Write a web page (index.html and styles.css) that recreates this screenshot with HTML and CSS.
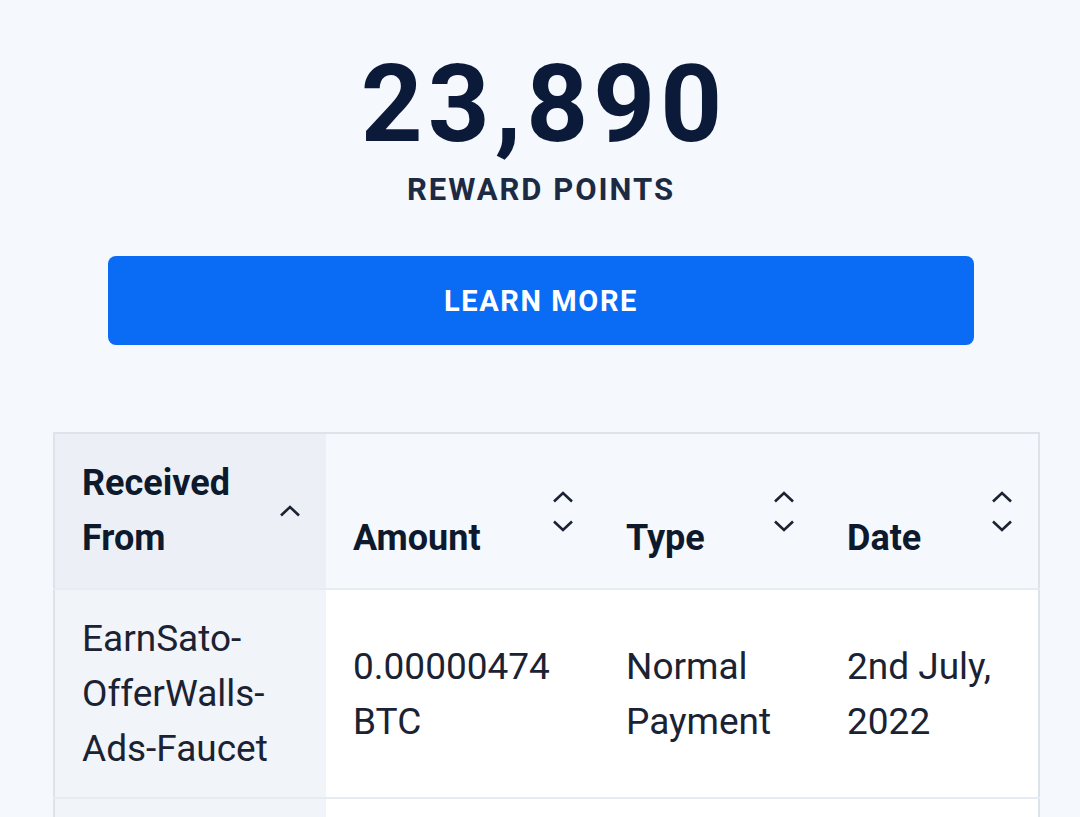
FILE: index.html
```html
<!DOCTYPE html>
<html lang="en">
<head>
  <meta charset="UTF-8">
  <meta name="viewport" content="width=device-width, initial-scale=1.0">
  <title>Reward Points</title>
  <link rel="stylesheet" href="styles.css">
</head>
<body>
  <main class="page">
    <section class="points">
      <h1 class="points-value">23,890</h1>
      <p class="points-label">REWARD POINTS</p>
      <button class="learn-more">LEARN MORE</button>
    </section>

    <table class="history">
      <colgroup>
        <col class="col-from">
        <col class="col-amount">
        <col class="col-type">
        <col class="col-date">
      </colgroup>
      <thead>
        <tr>
          <th class="sorted">
            <div class="th-inner">
              <span class="th-label">Received<br>From</span>
              <span class="sort">
                <svg width="22" height="12" viewBox="0 0 22 12"><path d="M2 10.5 L11 2 L20 10.5" fill="none" stroke="currentColor" stroke-width="2.6"/></svg>
              </span>
            </div>
          </th>
          <th>
            <div class="th-inner">
              <span class="th-label">Amount</span>
              <span class="sort">
                <svg width="22" height="12" viewBox="0 0 22 12"><path d="M2 10.5 L11 2 L20 10.5" fill="none" stroke="currentColor" stroke-width="2.6"/></svg>
                <svg width="22" height="12" viewBox="0 0 22 12"><path d="M2 1.5 L11 10 L20 1.5" fill="none" stroke="currentColor" stroke-width="2.6"/></svg>
              </span>
            </div>
          </th>
          <th>
            <div class="th-inner">
              <span class="th-label">Type</span>
              <span class="sort">
                <svg width="22" height="12" viewBox="0 0 22 12"><path d="M2 10.5 L11 2 L20 10.5" fill="none" stroke="currentColor" stroke-width="2.6"/></svg>
                <svg width="22" height="12" viewBox="0 0 22 12"><path d="M2 1.5 L11 10 L20 1.5" fill="none" stroke="currentColor" stroke-width="2.6"/></svg>
              </span>
            </div>
          </th>
          <th>
            <div class="th-inner">
              <span class="th-label">Date</span>
              <span class="sort">
                <svg width="22" height="12" viewBox="0 0 22 12"><path d="M2 10.5 L11 2 L20 10.5" fill="none" stroke="currentColor" stroke-width="2.6"/></svg>
                <svg width="22" height="12" viewBox="0 0 22 12"><path d="M2 1.5 L11 10 L20 1.5" fill="none" stroke="currentColor" stroke-width="2.6"/></svg>
              </span>
            </div>
          </th>
        </tr>
      </thead>
      <tbody>
        <tr>
          <td class="sorted">EarnSato-<br>OfferWalls-<br>Ads-Faucet</td>
          <td>0.00000474<br>BTC</td>
          <td>Normal<br>Payment</td>
          <td>2nd July,<br>2022</td>
        </tr>
        <tr class="next-row">
          <td class="sorted"></td>
          <td></td>
          <td></td>
          <td></td>
        </tr>
      </tbody>
    </table>
  </main>
</body>
</html>
```

FILE: styles.css
```css
/* Page */
body {
  margin: 0;
  background-color: #f5f8fc;
  font-family: Roboto, "Noto Sans", sans-serif;
  color: #0d1a2e;
  overflow: hidden;
}

.page {
  padding: 0 41px 0 53px;
}

/* Points summary */
.points {
  display: flex;
  flex-direction: column;
  align-items: center;
  padding: 44px 0 0;
  margin-right: 10px;
}

.points-value {
  margin: 0;
  font-size: 108px;
  font-weight: 700;
  line-height: 120px;
  color: #0a1a38;
  letter-spacing: 5px;
  padding-left: 6px;
}

.points-label {
  margin: 6px 0 0;
  font-size: 31px;
  font-weight: 700;
  letter-spacing: 2px;
  color: #1c2a43;
  line-height: 40px;
}

.learn-more {
  align-self: stretch;
  margin: 46px 55px 0 55px;
  height: 89px;
  border: 0;
  border-radius: 8px;
  background-color: #0a6bf4;
  color: #fff;
  font-family: inherit;
  font-size: 29px;
  font-weight: 700;
  letter-spacing: 1.6px;
}

/* History table */
.history {
  margin-top: 87px;
  width: 987px;
  border-collapse: collapse;
  table-layout: fixed;
  border: 2px solid #dde3eb;
  border-bottom: 0;
}

.col-from { width: 272px; }
.col-amount { width: 273px; }
.col-type { width: 221px; }
.col-date { width: 219px; }

.history th,
.history td {
  text-align: left;
  padding: 0 0 0 27px;
}

.history th {
  font-size: 36px;
  line-height: 55px;
  font-weight: 700;
  color: #0d1a2e;
  background-color: #f5f8fc;
}

.history th.sorted {
  background-color: #ecf0f6;
}

.th-inner {
  box-sizing: border-box;
  height: 154px;
  display: flex;
  align-items: center;
  justify-content: space-between;
  padding-right: 25px;
}

.th-label {
  align-self: flex-end;
  padding-bottom: 22px;
}

.sort {
  display: flex;
  flex-direction: column;
  gap: 17px;
  color: #1a2233;
}

.sort svg {
  display: block;
}

.history td {
  height: 207px;
  font-size: 37px;
  line-height: 55px;
  font-weight: 400;
  color: #1a2233;
  background-color: #fff;
  border-top: 2px solid #e7ecf2;
  vertical-align: middle;
}

.history td.sorted {
  background-color: #f1f4f8;
}
```
